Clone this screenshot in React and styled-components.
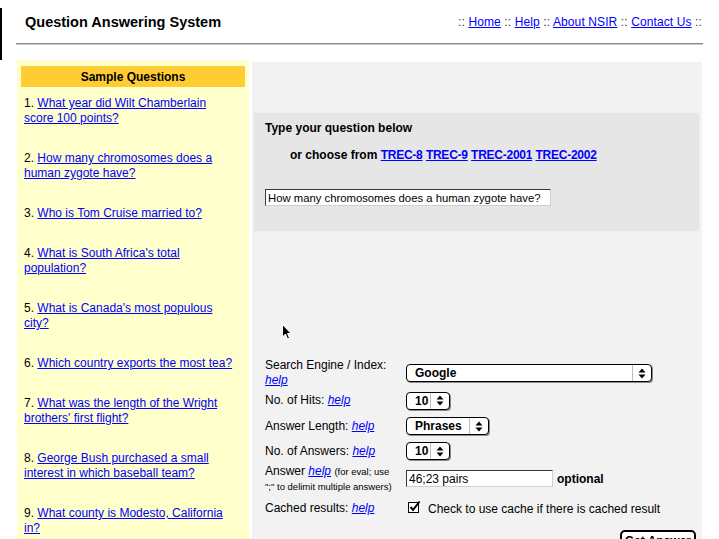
import React from 'react';
import styled, { createGlobalStyle } from 'styled-components';

const GlobalStyle = createGlobalStyle`
  html, body { margin: 0; padding: 0; background: #fff; height: 100%; overflow: hidden; }
  body { font-family: "Liberation Sans", Arial, Helvetica, sans-serif; font-size: 12px; color: #000; }
  #root { height: 100%; }
`;

const Page = styled.div`
  width: 719px;
  height: 539px;
  display: flex;
  flex-direction: column;
  overflow: hidden;
`;

const Top = styled.div`
  display: flex;
  height: 60px;
  flex-shrink: 0;
`;

const FrameEdge = styled.div`
  width: 2px;
  margin-top: 8px;
  background: #000;
`;

const Header = styled.header`
  margin-left: 14px;
  width: 687px;
  display: flex;
  flex-direction: column;
`;

const TitleBar = styled.div`
  height: 43px;
  display: flex;
  align-items: center;
  justify-content: space-between;
  padding: 0 1px 0 9px;
`;

const Title = styled.h1`
  margin: 0;
  font-size: 14.5px;
  font-weight: bold;
`;

const Nav = styled.nav`
  font-size: 12px;
  letter-spacing: 0.11px;
  color: #333;
  white-space: pre;
`;

const Link = styled.a`
  color: #0000ff;
  text-decoration: underline;
  cursor: pointer;
`;

const TrecLink = styled(Link)`
  letter-spacing: -0.25px;
`;

const Rule = styled.div`
  height: 0;
  border-top: 1px solid #8a8a8a;
  border-bottom: 1px solid #cdcdcd;
`;

const Columns = styled.div`
  flex: 1;
  display: flex;
  gap: 3px;
  padding-left: 17px;
  align-items: stretch;
`;

const Sidebar = styled.aside`
  width: 232px;
  background: #ffffcc;
  padding-top: 6px;
  box-sizing: border-box;
`;

const SidebarHead = styled.div`
  margin: 0 4px;
  height: 21px;
  background: #ffcc33;
  font-weight: bold;
  font-size: 12px;
  display: flex;
  align-items: center;
  justify-content: center;
`;

const QuestionList = styled.ol`
  list-style: none;
  margin: 0;
  padding: 9px 13px 0 7px;
  display: flex;
  flex-direction: column;
  gap: 25px;
`;

const QuestionItem = styled.li`
  font-size: 12px;
  line-height: 15px;
`;

const Main = styled.main`
  position: relative;
  width: 450px;
  margin-top: 2px;
  background: #f2f2f2;
  padding-top: 51px;
  box-sizing: border-box;
`;

const QuestionBox = styled.section`
  margin: 0 3px 0 2px;
  height: 118px;
  box-sizing: border-box;
  background: #e6e6e6;
  padding: 8px 11px 0;
`;

const BoxTitle = styled.div`
  font-weight: bold;
  line-height: 15px;
`;

const ChooseLine = styled.div`
  margin-top: 12px;
  padding-left: 25px;
  font-weight: bold;
  line-height: 15px;
`;

const Field = styled.input`
  display: block;
  box-sizing: border-box;
  width: ${p => p.$w}px;
  height: 17px;
  margin: ${p => p.$mt || 0}px 0 0;
  padding: 0 2px;
  border: 1px solid;
  border-color: #3a3a3a #cfcfcf #cfcfcf #3a3a3a;
  background: #fff;
  font-family: "Liberation Sans", Arial, sans-serif;
  font-size: ${p => p.$size}px;
  color: #000;
  outline: none;
`;

const Form = styled.form`
  margin: 128px 0 0;
  padding: 0 0 0 13px;
`;

const Grid = styled.div`
  display: grid;
  grid-template-columns: 135px 1fr;
  column-gap: 6px;
  grid-template-rows: 28px 27px 24px 26px 29px 31px;
  align-items: center;
`;

const Label = styled.div`
  font-size: 12px;
  line-height: 15px;
`;

const Help = styled(Link)`
  font-style: italic;
`;

const Small = styled.span`
  font-size: 9.5px;
`;

const Control = styled.div`
  display: flex;
  align-items: center;
`;

const SelectBox = styled.div`
  display: flex;
  width: ${p => p.$w}px;
  height: 18px;
  box-sizing: border-box;
  border: 1px solid #000;
  border-radius: 4px;
  background: #fff;
  box-shadow: 1px 1px 0 #8c8c8c;
  font-weight: bold;
  font-size: 12px;
`;

const SelectValue = styled.span`
  flex: 1;
  display: flex;
  align-items: center;
  padding-left: 8px;
`;

const SelectArrows = styled.span`
  width: 18px;
  border-left: 1px solid #bdbdbd;
  display: flex;
  align-items: center;
  justify-content: center;
`;

const Optional = styled.span`
  margin-left: 4px;
  font-weight: bold;
  font-size: 12px;
`;

const CheckText = styled.span`
  margin-left: 7px;
  font-size: 12px;
`;

const CheckMark = styled.svg`
  margin-left: 2px;
  margin-top: -3px;
`;

const ButtonRow = styled.div`
  display: flex;
  justify-content: flex-end;
  padding-right: 6px;
  margin-top: 6px;
`;

const Button = styled.button`
  height: 21px;
  padding: 0 3px;
  border: 2px solid #000;
  border-radius: 5px;
  background: #fff;
  font-family: "Liberation Sans", Arial, sans-serif;
  font-weight: bold;
  font-size: 12px;
  color: #000;
`;

const Pointer = styled.svg`
  position: absolute;
  left: 30px;
  top: 262px;
`;

const Arrows = () => (
  <svg width="8" height="11" viewBox="0 0 8 11">
    <polygon points="0.5,4.5 4,0.5 7.5,4.5" fill="#000" />
    <polygon points="0.5,6.5 7.5,6.5 4,10.5" fill="#000" />
  </svg>
);

const Select = ({ w, value }) => (
  <SelectBox $w={w}>
    <SelectValue>{value}</SelectValue>
    <SelectArrows><Arrows /></SelectArrows>
  </SelectBox>
);

const questions = [
  'What year did Wilt Chamberlain score 100 points?',
  'How many chromosomes does a human zygote have?',
  'Who is Tom Cruise married to?',
  "What is South Africa's total population?",
  "What is Canada's most populous city?",
  'Which country exports the most tea?',
  "What was the length of the Wright brothers' first flight?",
  'George Bush purchased a small interest in which baseball team?',
  'What county is Modesto, California in?',
];

export default function App() {
  return (
    <Page>
      <GlobalStyle />
      <Top>
        <FrameEdge />
        <Header>
          <TitleBar>
            <Title>Question Answering System</Title>
            <Nav>
              {':: '}<Link>Home</Link>{' :: '}<Link>Help</Link>{' :: '}
              <Link>About NSIR</Link>{' :: '}<Link>Contact Us</Link>{' ::'}
            </Nav>
          </TitleBar>
          <Rule />
        </Header>
      </Top>
      <Columns>
        <Sidebar>
          <SidebarHead>Sample Questions</SidebarHead>
          <QuestionList>
            {questions.map((q, i) => (
              <QuestionItem key={i}>
                {i + 1}. <Link>{q}</Link>
              </QuestionItem>
            ))}
          </QuestionList>
        </Sidebar>
        <Main>
          <QuestionBox>
            <BoxTitle>Type your question below</BoxTitle>
            <ChooseLine>
              or choose from <TrecLink>TREC-8</TrecLink> <TrecLink>TREC-9</TrecLink>{' '}
              <TrecLink>TREC-2001</TrecLink> <TrecLink>TREC-2002</TrecLink>
            </ChooseLine>
            <Field $w={286} $size={11.3} $mt={26} defaultValue="How many chromosomes does a human zygote have?" />
          </QuestionBox>
          <Form onSubmit={e => e.preventDefault()}>
            <Grid>
              <Label>Search Engine / Index: <Help>help</Help></Label>
              <Control><Select w={246} value="Google" /></Control>

              <Label>No. of Hits: <Help>help</Help></Label>
              <Control><Select w={44} value="10" /></Control>

              <Label>Answer Length: <Help>help</Help></Label>
              <Control><Select w={83} value="Phrases" /></Control>

              <Label>No. of Answers: <Help>help</Help></Label>
              <Control><Select w={44} value="10" /></Control>

              <Label>
                Answer <Help>help</Help> <Small>(for eval; use ";" to delimit multiple answers)</Small>
              </Label>
              <Control>
                <Field $w={147} $size={12} defaultValue="46;23 pairs" />
                <Optional>optional</Optional>
              </Control>

              <Label>Cached results: <Help>help</Help></Label>
              <Control>
                <CheckMark width="13" height="14" viewBox="0 0 13 14">
                  <rect x="0.5" y="2.5" width="10" height="10" fill="#fff" stroke="#000" />
                  <path d="M2.5 7 L5 10 L11.5 1.5" fill="none" stroke="#000" strokeWidth="2" />
                </CheckMark>
                <CheckText>Check to use cache if there is cached result</CheckText>
              </Control>
            </Grid>
            <ButtonRow>
              <Button type="submit">Get Answer</Button>
            </ButtonRow>
          </Form>
          <Pointer width="10" height="17" viewBox="0 0 10 17">
            <path d="M0.5 0.5 L0.5 13 L3.5 10 L5.5 15 L7.5 14 L5.5 9.5 L9 9.5 Z" fill="#000" stroke="#fff" strokeWidth="1" />
          </Pointer>
        </Main>
      </Columns>
    </Page>
  );
}
